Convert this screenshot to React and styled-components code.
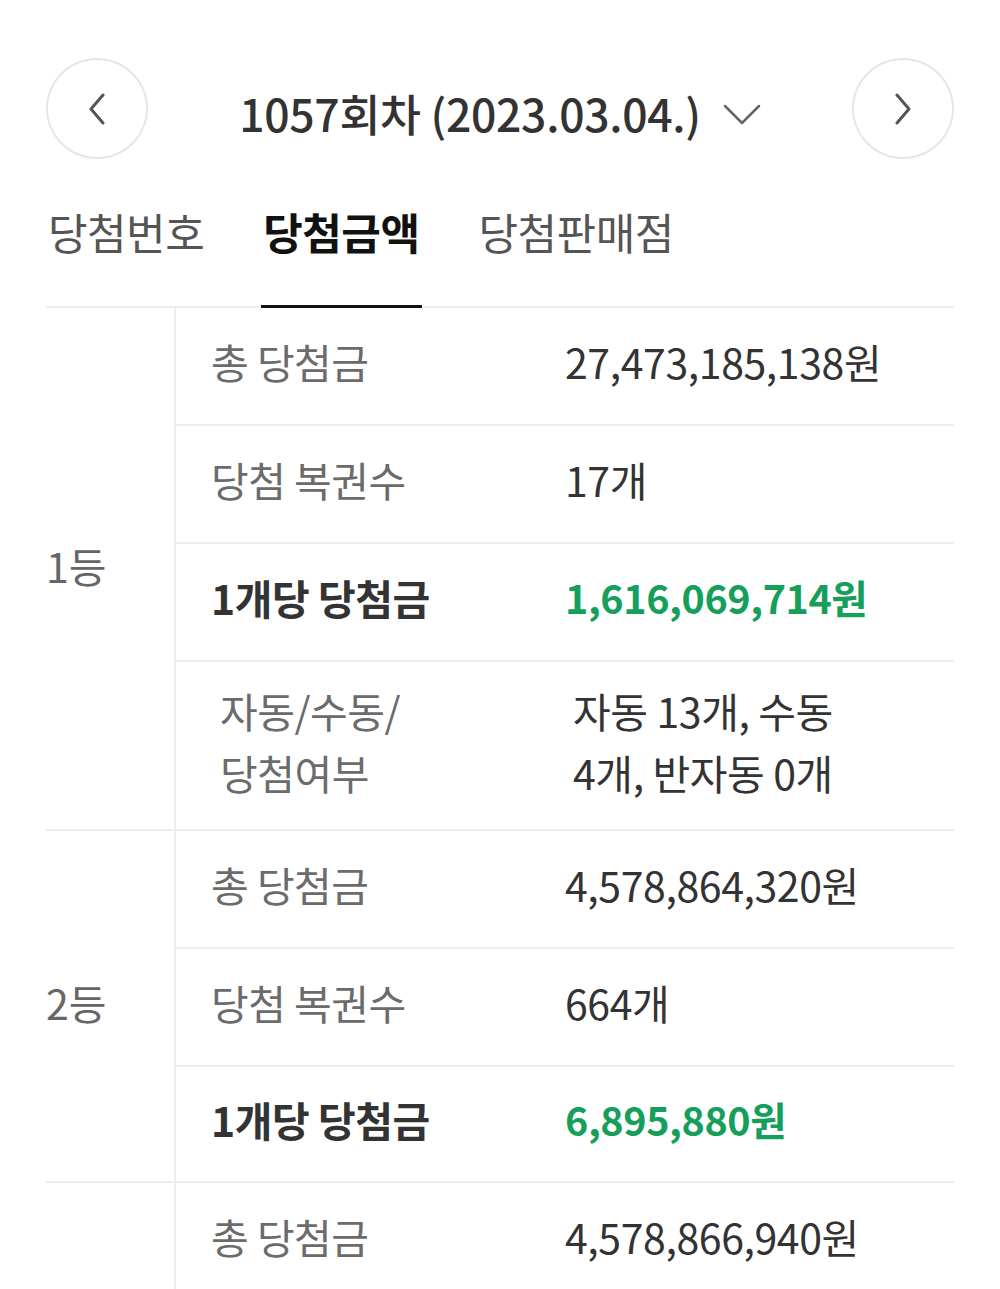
import React from "react";
import styled, { createGlobalStyle } from "styled-components";

const Global = createGlobalStyle`
  html, body { margin: 0; padding: 0; background: #fff; }
  body { font-family: "Noto Sans CJK KR", "Noto Sans", sans-serif; color: #333; }
  * { box-sizing: border-box; }
`;

const Page = styled.div`
  width: 1000px;
  padding: 58px 46px 0 46px;
`;

const Header = styled.div`
  display: flex;
  align-items: center;
  justify-content: space-between;
  height: 101px;
`;

const CircleButton = styled.button`
  width: 102px;
  height: 101px;
  border-radius: 50%;
  border: 2px solid #e6e6e6;
  background: #fff;
  display: flex;
  align-items: center;
  justify-content: center;
  padding: 0;
  margin: 0;
`;

const TitleWrap = styled.div`
  display: flex;
  align-items: center;
  gap: 22px;
  padding-top: 10px;
`;

const Title = styled.div`
  font-size: 44.5px;
  font-weight: 500;
  color: #333;
  line-height: 1;
  letter-spacing: -0.3px;
`;

const Tabs = styled.div`
  display: flex;
  gap: 55px;
  margin-top: 48px;
  border-bottom: 2px solid #eeeeee;
  padding-left: 0;
`;

const Tab = styled.div`
  font-size: 43px;
  line-height: 48px;
  padding: 0 2px 50px 2px;
  margin-bottom: -2px;
  color: ${(p) => (p.$active ? "#111" : "#555")};
  font-weight: ${(p) => (p.$active ? 700 : 400)};
  letter-spacing: -0.5px;
  border-bottom: 3px solid ${(p) => (p.$active ? "#111" : "transparent")};
`;

const Group = styled.div`
  display: flex;
  border-bottom: 2px solid #eeeeee;
`;

const GroupHead = styled.div`
  width: 130px;
  flex: none;
  display: flex;
  align-items: center;
  font-size: 41px;
  color: #666;
  border-right: 2px solid #eeeeee;
  padding-left: 0;
  padding-bottom: 8px;
`;

const GroupBody = styled.div`
  flex: 1;
  display: flex;
  flex-direction: column;
`;

const Row = styled.div`
  box-sizing: content-box;
  display: grid;
  grid-template-columns: 352px 1fr;
  align-items: center;
  height: ${(p) => p.$h || 116}px;
  & + & { border-top: 2px solid #eeeeee; }
`;

const Label = styled.div`
  font-size: 41px;
  line-height: 62px;
  padding-left: ${(p) => (p.$wide ? 44 : 35)}px;
  padding-bottom: 10px;
  color: ${(p) => (p.$strong ? "#333" : "#6b6b6b")};
  font-weight: ${(p) => (p.$strong ? 700 : 400)};
  letter-spacing: -0.5px;
`;

const Value = styled.div`
  font-size: ${(p) => (p.$green ? 39.5 : 41)}px;
  line-height: 62px;
  padding-left: ${(p) => (p.$wide ? 45 : 37)}px;
  padding-bottom: 10px;
  color: ${(p) => (p.$green ? "#14a05a" : "#333")};
  font-weight: ${(p) => (p.$green ? 700 : 400)};
  letter-spacing: -0.4px;
`;

const Chevron = ({ dir }) => {
  const d = dir === "left" ? "M15 2 L3 16 L15 30" : "M3 2 L15 16 L3 30";
  return (
    <svg width="18" height="32" viewBox="0 0 18 32">
      <path d={d} fill="none" stroke="#555" strokeWidth="3" strokeLinecap="round" strokeLinejoin="round" />
    </svg>
  );
};

const Down = () => (
  <svg width="38" height="22" viewBox="0 0 38 22">
    <path d="M2 3 L19 20 L36 3" fill="none" stroke="#666" strokeWidth="2.5" strokeLinecap="round" strokeLinejoin="round" />
  </svg>
);

const groups = [
  {
    name: "1등",
    rows: [
      { label: "총 당첨금", value: "27,473,185,138원" },
      { label: "당첨 복권수", value: "17개" },
      { label: "1개당 당첨금", value: "1,616,069,714원", strong: true },
      {
        label: ["자동/수동/", "당첨여부"],
        value: ["자동 13개, 수동", "4개, 반자동 0개"],
        wide: true,
        h: 167,
      },
    ],
  },
  {
    name: "2등",
    rows: [
      { label: "총 당첨금", value: "4,578,864,320원" },
      { label: "당첨 복권수", value: "664개" },
      { label: "1개당 당첨금", value: "6,895,880원", strong: true, h: 114 },
    ],
  },
  {
    name: "3등",
    hideName: true,
    rows: [{ label: "총 당첨금", value: "4,578,866,940원" }],
  },
];

const lines = (t) =>
  Array.isArray(t) ? t.map((l, i) => <div key={i}>{l}</div>) : t;

export default function App() {
  return (
    <>
      <Global />
      <Page>
        <Header>
          <CircleButton aria-label="이전">
            <Chevron dir="left" />
          </CircleButton>
          <TitleWrap>
            <Title>1057회차 (2023.03.04.)</Title>
            <Down />
          </TitleWrap>
          <CircleButton aria-label="다음">
            <Chevron dir="right" />
          </CircleButton>
        </Header>
        <Tabs>
          <Tab>당첨번호</Tab>
          <Tab $active>당첨금액</Tab>
          <Tab>당첨판매점</Tab>
        </Tabs>
        {groups.map((g) => (
          <Group key={g.name}>
            <GroupHead>{g.hideName ? "" : g.name}</GroupHead>
            <GroupBody>
              {g.rows.map((r, i) => (
                <Row key={i} $h={r.h}>
                  <Label $strong={r.strong} $wide={r.wide}>{lines(r.label)}</Label>
                  <Value $green={r.strong} $wide={r.wide}>{lines(r.value)}</Value>
                </Row>
              ))}
            </GroupBody>
          </Group>
        ))}
      </Page>
    </>
  );
}
